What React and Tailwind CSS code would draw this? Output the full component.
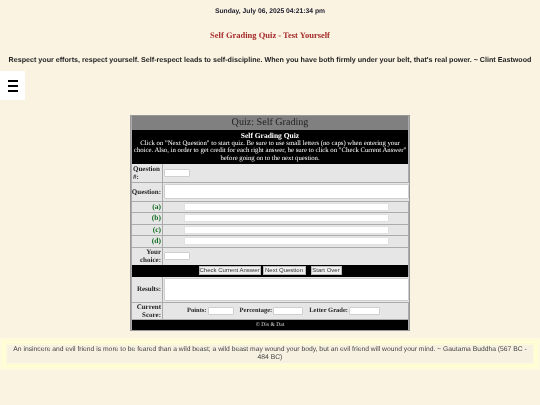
import React from "react";

const row = "grid grid-cols-[30px_1fr] gap-[1px]";
const label = "bg-[#e6e6e6] flex items-center justify-end text-right font-bold text-[7px] leading-[8px] pr-[1px] text-[#222]";
const body = "bg-[#e6e6e6] flex items-center pl-[1px]";
const field = "block bg-white border border-[#cfcfcf] rounded-[1px]";
const btn = "h-[9px] bg-[#efefef] border border-[#bbb] text-[6px] leading-[7px] text-[#333] whitespace-nowrap";

const ChoiceRow = ({ letter }) => (
  <div className={row + " h-[10.5px]"}>
    <div className={label + " !text-[#0f6b1f] !text-[7.5px]"}>({letter})</div>
    <div className={body}>
      <input className="block ml-[20px] h-[8px] w-[205px] bg-white border border-[#e0e0e0]" readOnly />
    </div>
  </div>
);

export default function App() {
  return (
    <div className="w-[540px] h-[405px] overflow-hidden bg-[#fbf3e2]">
      <div className="[will-change:transform] [text-rendering:geometricPrecision] text-black font-['Liberation_Sans',sans-serif]">
        <p className="pt-[7px] text-center text-[6.75px] leading-[9px] font-bold text-[#1a1a2a]">
          Sunday, July 06, 2025 04:21:34 pm
        </p>
        <h1 className="mt-[14px] text-center text-[8.5px] leading-[11px] font-bold text-[#a52a2a] font-['Liberation_Serif',serif]">
          Self Grading Quiz - Test Yourself
        </h1>
        <p className="mt-[14px] text-center text-[7.15px] leading-[10px] font-bold text-[#222] whitespace-nowrap">
          Respect your efforts, respect yourself. Self-respect leads to self-discipline. When you have both firmly under your belt, that's real power. ~ Clint Eastwood
        </p>
        <div className="mt-[6px] w-[25px] h-[29px] bg-white flex flex-col justify-center items-center gap-[3px]">
          <span className="block w-[10px] h-[2px] bg-black" />
          <span className="block w-[10px] h-[2px] bg-black" />
          <span className="block w-[10px] h-[2px] bg-black" />
        </div>

        <div className="mt-[15px] mx-auto w-[280px] border border-[#999] bg-[#ababab] px-[1px] font-['Liberation_Serif',serif]">
          <div className="bg-[#808080] h-[14px] text-center text-[10.1px] leading-[14px] text-[#222]">Quiz: Self Grading</div>
          <div className="bg-black h-[33.5px] text-white text-center text-[6.75px] leading-[7.7px] whitespace-nowrap pt-[2px]">
            <div className="font-bold text-[7.5px]">Self Grading Quiz</div>
            Click on "Next Question" to start quiz. Be sure to use small letters (no caps) when entering your<br />
            choice. Also, in order to get credit for each right answer, be sure to click on "Check Current Answer"<br />
            before going on to the next question.
          </div>
          <div className="flex flex-col gap-[1px]">
            <div className={row + " h-[18px]"}>
              <div className={label + " !justify-start !text-left pl-[1px]"}>Question #:</div>
              <div className={body}>
                <input className={field + " h-[8px] w-[26px]"} readOnly />
              </div>
            </div>
            <div className={row + " h-[18px]"}>
              <div className={label}>Question:</div>
              <div className={body}>
                <div className={field + " h-[15px] w-[245px]"} />
              </div>
            </div>
            <ChoiceRow letter="a" />
            <ChoiceRow letter="b" />
            <ChoiceRow letter="c" />
            <ChoiceRow letter="d" />
            <div className={row + " h-[17px]"}>
              <div className={label}>Your choice:</div>
              <div className={body}>
                <input className={field + " h-[8px] w-[26px]"} readOnly />
              </div>
            </div>
          </div>
          <div className="bg-black h-[12px] flex justify-center items-center gap-[2px] font-['Liberation_Sans',sans-serif]">
            <button className={btn + " w-[62px]"}>Check Current Answer</button>
            <button className={btn + " w-[43px]"}>Next Question</button>
            <button className={btn + " ml-[3px] w-[31px]"}>Start Over</button>
          </div>
          <div className="flex flex-col gap-[1px]">
            <div className={row + " h-[25px]"}>
              <div className={label}>Results:</div>
              <div className={body}>
                <div className={field + " h-[23px] w-[245px]"} />
              </div>
            </div>
            <div className={row + " h-[16.5px]"}>
              <div className={label}>Current Score:</div>
              <div className="bg-[#e6e6e6] flex items-center justify-center gap-[6px] pr-[4px] text-[6.5px] font-bold text-[#222]">
                <span className="flex items-center">Points:<input className={field + " ml-[1px] h-[8px] w-[26px]"} readOnly /></span>
                <span className="flex items-center">Percentage:<input className={field + " ml-[1px] h-[8px] w-[30px]"} readOnly /></span>
                <span className="flex items-center">Letter Grade:<input className={field + " ml-[1px] h-[8px] w-[31px]"} readOnly /></span>
              </div>
            </div>
          </div>
          <div className="mt-[1px] bg-black h-[10px] text-[#ddd] text-center text-[5.6px] leading-[10px]">© Dis &amp; Dat</div>
        </div>

        <div className="mt-[7px] bg-[#fdfbdc] p-[3px]">
          <div className="border-[2px] border-[#ffffd0] p-[2px]">
            <p className="bg-[#f7f1e1] py-[1px] px-[5px] text-center text-[6.75px] leading-[8px] text-[#444]">
              An insincere and evil friend is more to be feared than a wild beast; a wild beast may wound your body, but an evil friend will wound your mind. ~ Gautama Buddha (567 BC - 484 BC)
            </p>
          </div>
        </div>
      </div>
    </div>
  );
}
